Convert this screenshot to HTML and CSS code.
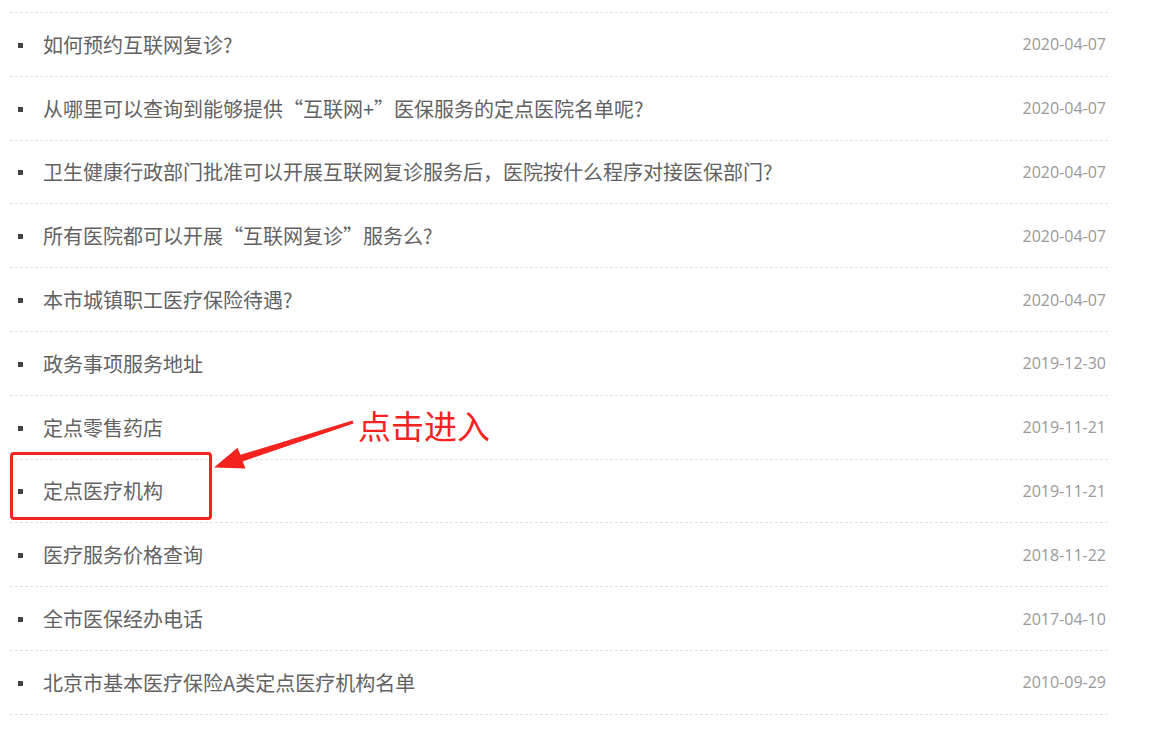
FILE: index.html
```html
<html>
<head>
    <title>医保服务 - 常见问题</title>
    <meta name="viewport" content="width=device-width, initial-scale=1.0">
    <link rel="stylesheet" href="styles.css">
</head>
<body>
    <div class="page">
        <ul class="news-list">
            <li class="news-item"><span class="news-title">如何预约互联网复诊?</span><span class="news-date">2020-04-07</span></li>
            <li class="news-item"><span class="news-title">从哪里可以查询到能够提供“互联网+”医保服务的定点医院名单呢?</span><span class="news-date">2020-04-07</span></li>
            <li class="news-item"><span class="news-title">卫生健康行政部门批准可以开展互联网复诊服务后，医院按什么程序对接医保部门?</span><span class="news-date">2020-04-07</span></li>
            <li class="news-item"><span class="news-title">所有医院都可以开展“互联网复诊”服务么?</span><span class="news-date">2020-04-07</span></li>
            <li class="news-item"><span class="news-title">本市城镇职工医疗保险待遇?</span><span class="news-date">2020-04-07</span></li>
            <li class="news-item"><span class="news-title">政务事项服务地址</span><span class="news-date">2019-12-30</span></li>
            <li class="news-item"><span class="news-title">定点零售药店</span><span class="news-date">2019-11-21</span></li>
            <li class="news-item"><span class="news-title">定点医疗机构</span><span class="news-date">2019-11-21</span></li>
            <li class="news-item"><span class="news-title">医疗服务价格查询</span><span class="news-date">2018-11-22</span></li>
            <li class="news-item"><span class="news-title">全市医保经办电话</span><span class="news-date">2017-04-10</span></li>
            <li class="news-item"><span class="news-title">北京市基本医疗保险A类定点医疗机构名单</span><span class="news-date">2010-09-29</span></li>
        </ul>

        <!-- screenshot annotation -->
        <div class="mark-box"></div>
        <svg class="mark-arrow" width="1157" height="749" viewBox="0 0 1157 749">
            <polygon points="352.5,420.5 240.5,454.8 237.5,447.8 214,467.5 245.5,468.4 242.7,461.4 353.5,423.5" fill="#f5231f"/>
        </svg>
        <div class="mark-label">点击进入</div>
    </div>
</body>
</html>
```

FILE: styles.css
```css
body {
    margin: 0;
    padding: 0;
    background: #fff;
    font-family: "Noto Sans CJK SC", "Noto Sans", sans-serif;
}
.page {
    position: relative;
    width: 1157px;
    height: 749px;
    overflow: hidden;
}
.news-list {
    list-style: none;
    margin: 12px 0 0 10px;
    padding: 0;
    width: 1098px;
    border-top: 1px dashed #e2e2e2;
}
.news-item {
    display: flex;
    align-items: center;
    justify-content: space-between;
    height: 62.8px;
    padding: 0 2px 0 8px;
    border-bottom: 1px dashed #e2e2e2;
}
.news-title {
    display: flex;
    align-items: center;
    font-size: 20px;
    color: #626262;
}
.news-title::before {
    content: "";
    width: 5px;
    height: 5px;
    background: #444;
    margin-right: 20px;
    margin-top: 2px;
}
.news-date {
    font-family: "Open Sans", sans-serif;
    font-size: 16px;
    color: #999;
}
.mark-box {
    position: absolute;
    left: 10px;
    top: 452px;
    width: 196px;
    height: 62px;
    border: 3px solid #f5231f;
    border-radius: 4px;
}
.mark-arrow {
    position: absolute;
    left: 0;
    top: 0;
}
.mark-label {
    position: absolute;
    left: 358px;
    top: 401px;
    font-size: 33px;
    line-height: 48px;
    color: #f5231f;
}
```
